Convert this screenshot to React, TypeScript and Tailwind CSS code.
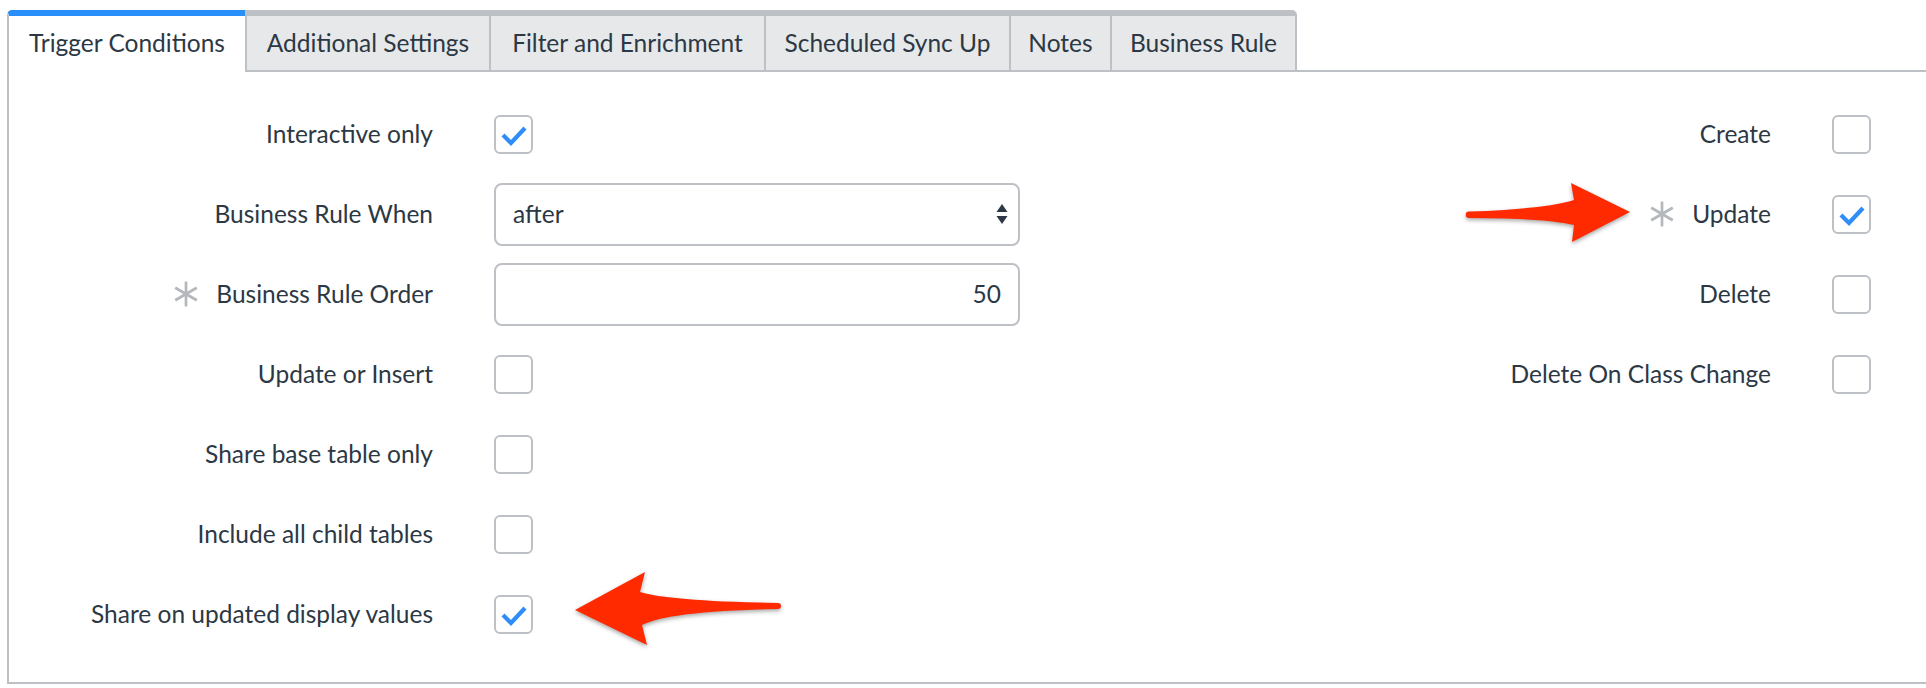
import React from "react"

const tabs = [
  { label: "Trigger Conditions", width: "w-[238px]" },
  { label: "Additional Settings", width: "w-[244px]" },
  { label: "Filter and Enrichment", width: "w-[275px]" },
  { label: "Scheduled Sync Up", width: "w-[245px]" },
  { label: "Notes", width: "w-[101px]" },
  { label: "Business Rule", width: "w-[187px]" },
]

function Asterisk() {
  return (
    <svg width="26" height="26" viewBox="0 0 26 26" className="shrink-0">
      <g stroke="#b4b8bc" strokeWidth="2.7" strokeLinecap="butt">
        <line x1="13" y1="0.5" x2="13" y2="25.5" />
        <line x1="2.2" y1="6.75" x2="23.8" y2="19.25" />
        <line x1="2.2" y1="19.25" x2="23.8" y2="6.75" />
      </g>
    </svg>
  )
}

function Checkbox({ checked }: { checked?: boolean }) {
  return (
    <div className="relative h-[39px] w-[39px] shrink-0 rounded-[6px] border-2 border-[#bdc1c5] bg-white">
      {checked && (
        <svg width="35" height="35" viewBox="0 0 35 35" className="absolute left-0 top-0">
          <path d="M7 18 L15 26 L29 11" fill="none" stroke="#2f8df7" strokeWidth="4.2" />
        </svg>
      )}
    </div>
  )
}

function Label({ text, required }: { text: string; required?: boolean }) {
  return (
    <div className="flex items-center justify-end gap-[17px]">
      {required && <Asterisk />}
      <span>{text}</span>
    </div>
  )
}

function Row({ children }: { children: React.ReactNode }) {
  return <div className="flex h-[80px] items-center">{children}</div>
}

export default function App() {
  return (
    <div className="relative h-[688px] w-[1926px] overflow-hidden bg-white font-['Lato',sans-serif] text-[24.5px] text-[#2c3844]">
      <div className="pl-[7px] pt-[10px]">
        {/* tab strip */}
        <div className="flex">
          {tabs.map((tab, i) =>
            i === 0 ? (
              <div
                key={tab.label}
                className={`${tab.width} flex h-[62px] items-center justify-center rounded-tl-[5px] border-l-2 border-t-[6px] border-l-[#bdc1c5] border-t-[#288efa] bg-white pb-[2px]`}
              >
                {tab.label}
              </div>
            ) : (
              <div
                key={tab.label}
                className={`${tab.width} flex h-[62px] items-center justify-center border-b-2 border-l-2 border-t-[6px] border-[#bdc1c5] bg-[#e6e8ea] ${
                  i === tabs.length - 1 ? "rounded-tr-[5px] border-r-2" : ""
                }`}
              >
                {tab.label}
              </div>
            )
          )}
          <div className="h-[62px] flex-1 border-b-2 border-[#bdc1c5]" />
        </div>

        {/* panel */}
        <div className="flex border-b-2 border-l-2 border-[#bdc1c5] pb-[28px] pt-[22px]">
          <div className="flex flex-col">
            <Row>
              <div className="w-[424px]"><Label text="Interactive only" /></div>
              <div className="ml-[61px]"><Checkbox checked /></div>
            </Row>
            <Row>
              <div className="w-[424px]"><Label text="Business Rule When" /></div>
              <div className="ml-[61px] flex h-[63px] w-[526px] items-center justify-between rounded-[8px] border-2 border-[#bdc1c5] pl-[17px] pr-[10px]">
                <span>after</span>
                <svg width="12" height="22" viewBox="0 0 12 22">
                  <path d="M6 1 L11.5 9 L0.5 9 Z" fill="#2c3844" />
                  <path d="M0.5 13 L11.5 13 L6 21 Z" fill="#2c3844" />
                </svg>
              </div>
            </Row>
            <Row>
              <div className="w-[424px]"><Label text="Business Rule Order" required /></div>
              <div className="ml-[61px] flex h-[63px] w-[526px] items-center justify-end rounded-[8px] border-2 border-[#bdc1c5] pr-[17px]">
                50
              </div>
            </Row>
            <Row>
              <div className="w-[424px]"><Label text="Update or Insert" /></div>
              <div className="ml-[61px]"><Checkbox /></div>
            </Row>
            <Row>
              <div className="w-[424px]"><Label text="Share base table only" /></div>
              <div className="ml-[61px]"><Checkbox /></div>
            </Row>
            <Row>
              <div className="w-[424px]"><Label text="Include all child tables" /></div>
              <div className="ml-[61px]"><Checkbox /></div>
            </Row>
            <Row>
              <div className="w-[424px]"><Label text="Share on updated display values" /></div>
              <div className="ml-[61px]"><Checkbox checked /></div>
            </Row>
          </div>

          <div className="ml-auto flex flex-col pr-[55px]">
            <Row>
              <div className="w-[400px]"><Label text="Create" /></div>
              <div className="ml-[61px]"><Checkbox /></div>
            </Row>
            <Row>
              <div className="w-[400px]"><Label text="Update" required /></div>
              <div className="ml-[61px]"><Checkbox checked /></div>
            </Row>
            <Row>
              <div className="w-[400px]"><Label text="Delete" /></div>
              <div className="ml-[61px]"><Checkbox /></div>
            </Row>
            <Row>
              <div className="w-[400px]"><Label text="Delete On Class Change" /></div>
              <div className="ml-[61px]"><Checkbox /></div>
            </Row>
          </div>
        </div>
      </div>

      {/* annotation arrows */}
      <svg
        width="1926"
        height="688"
        viewBox="0 0 1926 688"
        className="pointer-events-none absolute left-0 top-0 drop-shadow-[0_2px_2px_rgba(0,0,0,0.35)]"
      >
        <path
          d="M1469 211.5 Q1545 209 1574 200 L1571 183 L1630 212 L1572 242 L1574 225 Q1545 218 1469 218 A3.2 3.2 0 0 1 1469 211.5 Z"
          fill="#ff2a00"
        />
        <path
          d="M575 610 L645 572 L640 592 Q668 601 778 603 A3 3 0 0 1 778 609 Q668 611 642 625 L647 645 Z"
          fill="#ff2a00"
        />
      </svg>
    </div>
  )
}
